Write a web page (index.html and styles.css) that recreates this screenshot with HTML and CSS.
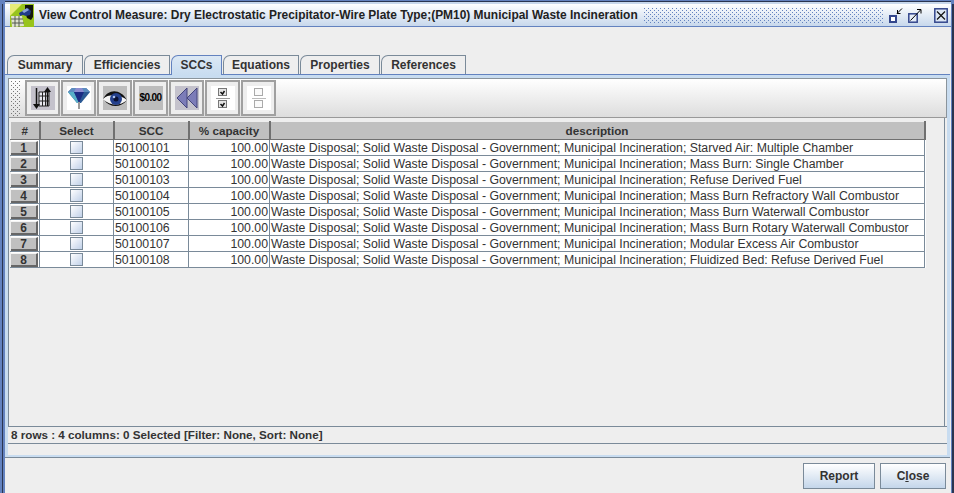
FILE: index.html
```html
<!DOCTYPE html>
<html lang="en">

<head>
    <meta charset="UTF-8">
    <title>View Control Measure</title>
    <link rel="stylesheet" href="styles.css">
</head>

<body>
    <div class="frame">
        <div class="titleBar">
            <svg class="appIcon" width="24" height="23" viewBox="0 0 24 23">
                <rect width="24" height="23" fill="#98c41c"/>
                <path d="M0 0h12L0 12z" fill="#e6ea78"/>
                <path d="M15 1h8v12l-2 3-4-2-2-6z" fill="#12160e"/>
                <path d="M9 9l9-5 3 3-1 4-4 1-3-1-3 1z" fill="#1f3a88"/>
                <path d="M12 7l5-3 2 2-5 3z" fill="#8ca4dc"/>
                <path d="M1 12l11 0 2 10-12 1z" fill="#dfe3d0"/>
                <path d="M1 15h12M2 19h12M5 12v11M9 12v11" stroke="#555a50"/>
            </svg>
            <span class="titleText">View Control Measure: Dry Electrostatic Precipitator-Wire Plate Type;(PM10) Municipal Waste Incineration</span>
            <div class="titleDots"></div>
            <div class="titleBtns">
                <svg width="14" height="15" viewBox="0 0 14 15">
                    <path d="M8 5.500L13 0.500M8 5.500h3.500M8.500 5.500V2" stroke="#000" fill="none"/>
                    <rect x="1" y="8" width="6" height="6" fill="#fff" stroke="#33468c" stroke-width="2"/>
                </svg>
                <svg width="14" height="15" viewBox="0 0 14 15">
                    <rect x="0.800" y="5.800" width="8.400" height="8.400" fill="#e4ecf8" stroke="#33468c" stroke-width="1.500"/>
                    <path d="M2.500 12.500L12.500 2M9 1.500h4v4" stroke="#000" fill="none"/>
                </svg>
                <svg class="closeBtn" width="14" height="15" viewBox="0 0 14 15">
                    <rect x="0.800" y="0.800" width="12.400" height="13.400" fill="#dce6f4" stroke="#33468c" stroke-width="1.500"/>
                    <path d="M3 3.500l8 8M11 3.500l-8 8" stroke="#111" stroke-width="1.200"/>
                </svg>
            </div>
        </div>

        <div class="tabRow">
            <div class="tab tabSummary">Summary</div>
            <div class="tab tabEff">Efficiencies</div>
            <div class="tab tabScc selected">SCCs</div>
            <div class="tab tabEq">Equations</div>
            <div class="tab tabProp">Properties</div>
            <div class="tab tabRef">References</div>
        </div>

        <div class="tabPanel">
            <div class="toolbar">
                <div class="grip"></div>
                <div class="toolBtn">
                    <svg width="24" height="24" viewBox="0 0 24 24">
                        <rect width="24" height="24" fill="#c4c2cc"/>
                        <path d="M8 6h10v14H8zM11.500 6v14M14.500 6v14M8 10h10M8 15h10" fill="#e8e8f0" stroke="#222"/>
                        <path d="M5.500 2v18" stroke="#111" stroke-width="1.500"/>
                        <path d="M2 18h7l-3.500 5z" fill="#111"/>
                        <path d="M16.500 4v16" stroke="#111" stroke-width="1.500"/>
                        <path d="M13 6h7l-3.500-5z" fill="#111"/>
                    </svg>
                </div>
                <div class="toolBtn">
                    <svg width="24" height="24" viewBox="0 0 24 24">
                        <rect width="24" height="24" fill="#fff"/>
                        <path d="M5 2h14l4 4-9 11h-4L1 6z" fill="#2c5a94"/>
                        <path d="M5 2h14l4 4H1z" fill="#5c8cc0"/>
                        <path d="M1 6h6l5 11h-2z" fill="#58b0c8"/>
                        <path d="M7 6h10l-5 11z" fill="#1c2c84"/>
                        <path d="M9 2h6l2 4H7z" fill="#8c8cd0"/>
                        <path d="M11 16h2v7h-2z" fill="#9a9a9a"/>
                    </svg>
                </div>
                <div class="toolBtn">
                    <svg width="24" height="24" viewBox="0 0 24 24">
                        <rect width="24" height="24" fill="#bcbcbc"/>
                        <path d="M0 13C5 5 17 4 24 14 18 21 6 22 0 13z" fill="#f4f4f4"/>
                        <path d="M0 13C5 3 17 2 24 14 18 9 6 7 0 13zM1 14c5 5 16 7 23 0-6 8-17 8-23 0z" fill="#111"/>
                        <circle cx="13" cy="13" r="6" fill="#24408c"/>
                        <circle cx="13" cy="13" r="2.500" fill="#0a1030"/>
                        <circle cx="11" cy="11" r="1.300" fill="#a8c0f0"/>
                    </svg>
                </div>
                <div class="toolBtn">
                    <div class="moneyIcon">$0.00</div>
                </div>
                <div class="toolBtn">
                    <svg width="24" height="24" viewBox="0 0 24 24">
                        <rect width="24" height="24" fill="#c4c2cc"/>
                        <path d="M12 2v20L2 12z" fill="#7c7cb8" stroke="#44447c"/>
                        <path d="M22 2v20L12 12z" fill="#7c7cb8" stroke="#44447c"/>
                    </svg>
                </div>
                <div class="toolBtn">
                    <svg width="24" height="24" viewBox="0 0 24 24">
                        <rect width="24" height="24" fill="#fff"/>
                        <rect x="7.500" y="2.500" width="8" height="7" fill="#e4e4e4" stroke="#777"/>
                        <path d="M9.500 6l2 2 2-3" stroke="#111" stroke-width="1.500" fill="none"/>
                        <path d="M5 12.500h14" stroke="#999"/>
                        <rect x="7.500" y="14.500" width="8" height="7" fill="#e4e4e4" stroke="#777"/>
                        <path d="M9.500 18l2 2 2-3" stroke="#111" stroke-width="1.500" fill="none"/>
                    </svg>
                </div>
                <div class="toolBtn">
                    <svg width="24" height="24" viewBox="0 0 24 24">
                        <rect width="24" height="24" fill="#fff"/>
                        <rect x="7.500" y="2.500" width="8" height="7" fill="#fafafa" stroke="#aaa"/>
                        <path d="M5 12.500h14" stroke="#bbb"/>
                        <rect x="7.500" y="14.500" width="8" height="7" fill="#fafafa" stroke="#aaa"/>
                    </svg>
                </div>
            </div>

            <div class="tableArea">
                <table class="grid">
                    <colgroup>
                        <col class="colNum">
                        <col class="colSelect">
                        <col class="colScc">
                        <col class="colCap">
                        <col class="colDesc">
                    </colgroup>
                    <thead>
                        <tr>
                            <th>#</th>
                            <th>Select</th>
                            <th>SCC</th>
                            <th>% capacity</th>
                            <th>description</th>
                        </tr>
                    </thead>
                    <tbody>
                        <tr>
                            <td class="rowNum"><span>1</span></td>
                            <td><div class="check"></div></td>
                            <td>50100101</td>
                            <td class="num">100.00</td>
                            <td>Waste Disposal; Solid Waste Disposal - Government; Municipal Incineration; Starved Air: Multiple Chamber</td>
                        </tr>
                        <tr>
                            <td class="rowNum"><span>2</span></td>
                            <td><div class="check"></div></td>
                            <td>50100102</td>
                            <td class="num">100.00</td>
                            <td>Waste Disposal; Solid Waste Disposal - Government; Municipal Incineration; Mass Burn: Single Chamber</td>
                        </tr>
                        <tr>
                            <td class="rowNum"><span>3</span></td>
                            <td><div class="check"></div></td>
                            <td>50100103</td>
                            <td class="num">100.00</td>
                            <td>Waste Disposal; Solid Waste Disposal - Government; Municipal Incineration; Refuse Derived Fuel</td>
                        </tr>
                        <tr>
                            <td class="rowNum"><span>4</span></td>
                            <td><div class="check"></div></td>
                            <td>50100104</td>
                            <td class="num">100.00</td>
                            <td>Waste Disposal; Solid Waste Disposal - Government; Municipal Incineration; Mass Burn Refractory Wall Combustor</td>
                        </tr>
                        <tr>
                            <td class="rowNum"><span>5</span></td>
                            <td><div class="check"></div></td>
                            <td>50100105</td>
                            <td class="num">100.00</td>
                            <td>Waste Disposal; Solid Waste Disposal - Government; Municipal Incineration; Mass Burn Waterwall Combustor</td>
                        </tr>
                        <tr>
                            <td class="rowNum"><span>6</span></td>
                            <td><div class="check"></div></td>
                            <td>50100106</td>
                            <td class="num">100.00</td>
                            <td>Waste Disposal; Solid Waste Disposal - Government; Municipal Incineration; Mass Burn Rotary Waterwall Combustor</td>
                        </tr>
                        <tr>
                            <td class="rowNum"><span>7</span></td>
                            <td><div class="check"></div></td>
                            <td>50100107</td>
                            <td class="num">100.00</td>
                            <td>Waste Disposal; Solid Waste Disposal - Government; Municipal Incineration; Modular Excess Air Combustor</td>
                        </tr>
                        <tr>
                            <td class="rowNum"><span>8</span></td>
                            <td><div class="check"></div></td>
                            <td>50100108</td>
                            <td class="num">100.00</td>
                            <td>Waste Disposal; Solid Waste Disposal - Government; Municipal Incineration; Fluidized Bed: Refuse Derived Fuel</td>
                        </tr>
                    </tbody>
                </table>
            </div>

            <div class="statusLine">8 rows : 4 columns: 0 Selected [Filter: None, Sort: None]</div>
        </div>

        <div class="footer">
            <button class="btn btnReport">Report</button>
            <button class="btn btnClose">C<u>l</u>ose</button>
        </div>
    </div>
</body>

</html>
```

FILE: styles.css
```css
* {
    box-sizing: border-box;
}

html, body {
    margin: 0;
    height: 100%;
    overflow: hidden;
}

body {
    background-color: #6382bf;
    font-family: "Liberation Sans", Arial, sans-serif;
    font-size: 12px;
    color: #333333;
}

/* window edge: light line, blue band, navy line */
.frame {
    width: 946px;
    height: 489px;
    margin: 4px 0 0 5px;
    background-color: #eeeeee;
    box-shadow: 0 -2px 0 #c8d8ec, 0 -3px 0 #2a3550,
                -2px 0 0 #6382bf, -3px 0 0 #2a3550,
                1px 0 0 #6382bf, 3px 0 0 #2a3550;
    display: flex;
    flex-direction: column;
}

.titleBar {
    height: 23px;
    flex: none;
    display: flex;
    align-items: center;
    padding-left: 5px;
    background: linear-gradient(#ffffff, #c8d8ec);
    border-bottom: 1px solid #6382bf;
}

.appIcon {
    flex: none;
}

.titleText {
    margin-left: 5px;
    font-size: 11.94px;
    font-weight: bold;
    color: #222222;
    white-space: nowrap;
}

/* 1px dots, staggered */
.titleDots {
    width: 239px;
    height: 15px;
    margin-left: 6px;
    flex: none;
    background-image: conic-gradient(at 1px 1px, transparent 75%, #6382bf 0),
                      conic-gradient(at 1px 1px, transparent 75%, #6382bf 0);
    background-size: 4px 4px;
    background-position: 0 0, 2px 2px;
}

.titleBtns {
    display: flex;
    align-items: center;
    gap: 5px;
    margin-left: 6px;
}

.closeBtn {
    margin-left: 7px;
}

.tabRow {
    display: flex;
    align-items: flex-start;
    height: 19px;
    margin-top: 28px;
    margin-bottom: 1px;
    padding-left: 2px;
    flex: none;
    position: relative;
    z-index: 1;
}

.tab {
    height: 19px;
    margin-right: 1px;
    border: 1px solid #7a8a99;
    border-bottom: none;
    border-top-left-radius: 7px;
    font-weight: bold;
    text-align: center;
    line-height: 18px;
    background-color: #eeeeee;
}

.tabSummary { width: 76px; }
.tabEff { width: 86px; }
.tabScc { width: 51px; }
.tabEq { width: 76px; }
.tabProp { width: 80px; }
.tabRef { width: 85px; }

.tab.selected {
    height: 20px;
    background: linear-gradient(#dce8f4, #c8dcf0);
    border-color: #6382bf;
}

.tabPanel {
    flex: none;
    width: 945px;
    height: 382px;
    padding-bottom: 11px;
    border: solid #c8dcf0;
    border-width: 3px 3px 2px 3px;
    box-shadow: 0 -1px 0 #6382bf, 0 1px 0 #7a8a99;
    display: flex;
    flex-direction: column;
}

.toolbar {
    height: 40px;
    flex: none;
    display: flex;
    align-items: center;
    gap: 1px;
    padding-left: 2px;
    background: linear-gradient(#ffffff, #dddddd);
    border: 1px solid #8a949c;
    border-bottom-color: #999999;
}

.grip {
    width: 10px;
    height: 35px;
    margin-right: 3px;
    background-image: conic-gradient(at 1px 1px, transparent 75%, #777777 0),
                      conic-gradient(at 1px 1px, transparent 75%, #777777 0);
    background-size: 4px 4px;
    background-position: 0 0, 2px 2px;
}

.toolBtn {
    width: 35px;
    height: 36px;
    display: flex;
    align-items: center;
    justify-content: center;
    border: 2px solid #a0a0a0;
    background-color: #eeeeee;
}

.moneyIcon {
    width: 24px;
    height: 24px;
    flex: none;
    background-color: #bcbcbc;
    color: #000000;
    font-size: 10px;
    font-weight: bold;
    line-height: 24px;
    text-align: center;
    letter-spacing: -0.6px;
}

.tableArea {
    flex: 1;
    margin-right: 2px;
    padding: 3px 0 0 1px;
    border: 1px solid #7a8a99;
    border-top: none;
    border-bottom: none;
    overflow: hidden;
}

.grid {
    width: 914px;
    border-collapse: collapse;
    table-layout: fixed;
    background-color: #ffffff;
    font-size: 12.3px;
}

.colNum { width: 29px; }
.colSelect { width: 74px; }
.colScc { width: 75px; }
.colCap { width: 81px; }
.colDesc { width: 655px; }

.grid th {
    height: 18px;
    padding: 0;
    font-size: 11.7px;
    font-weight: bold;
    text-align: center;
    background-color: #c0c0c0;
    border: 1px solid #eeeeee;
    border-right: 2px solid #707070;
    border-bottom: 1px solid #707070;
}

.grid td {
    height: 16px;
    padding: 0 1px;
    white-space: nowrap;
    overflow: hidden;
    border: 1px solid #7a8a99;
}

.grid td.num {
    text-align: right;
}

.grid td.rowNum {
    padding: 0;
    border-left-color: #eeeeee;
}

.rowNum span {
    display: block;
    height: 14px;
    margin-right: 1px;
    line-height: 13px;
    font-size: 11.9px;
    font-weight: bold;
    text-align: center;
    background-color: #c0c0c0;
    border-top: 1px solid #f4f4f4;
    border-right: 2px solid #666666;
    border-bottom: 2px solid #666666;
}

.check {
    width: 13px;
    height: 13px;
    margin: 0 auto;
    border: 1px solid #7a8a99;
    background: linear-gradient(135deg, #ffffff, #c0d0e8);
}

.statusLine {
    height: 18px;
    flex: none;
    padding-left: 3px;
    line-height: 16px;
    font-size: 11.67px;
    font-weight: bold;
    white-space: nowrap;
    border-top: 1px solid #7a8a99;
    border-bottom: 1px solid #7a8a99;
}

.footer {
    flex: 1;
    display: flex;
    justify-content: flex-end;
    align-items: flex-start;
    gap: 5px;
    padding: 6px 5px 0 0;
}

.btn {
    height: 26px;
    padding: 0;
    font-family: "Liberation Sans", Arial, sans-serif;
    font-size: 12px;
    font-weight: bold;
    color: #333333;
    border: 1px solid #7a8a99;
    background: linear-gradient(#ffffff, #c4d6ea);
}

.btnReport { width: 72px; }
.btnClose { width: 66px; }
```
